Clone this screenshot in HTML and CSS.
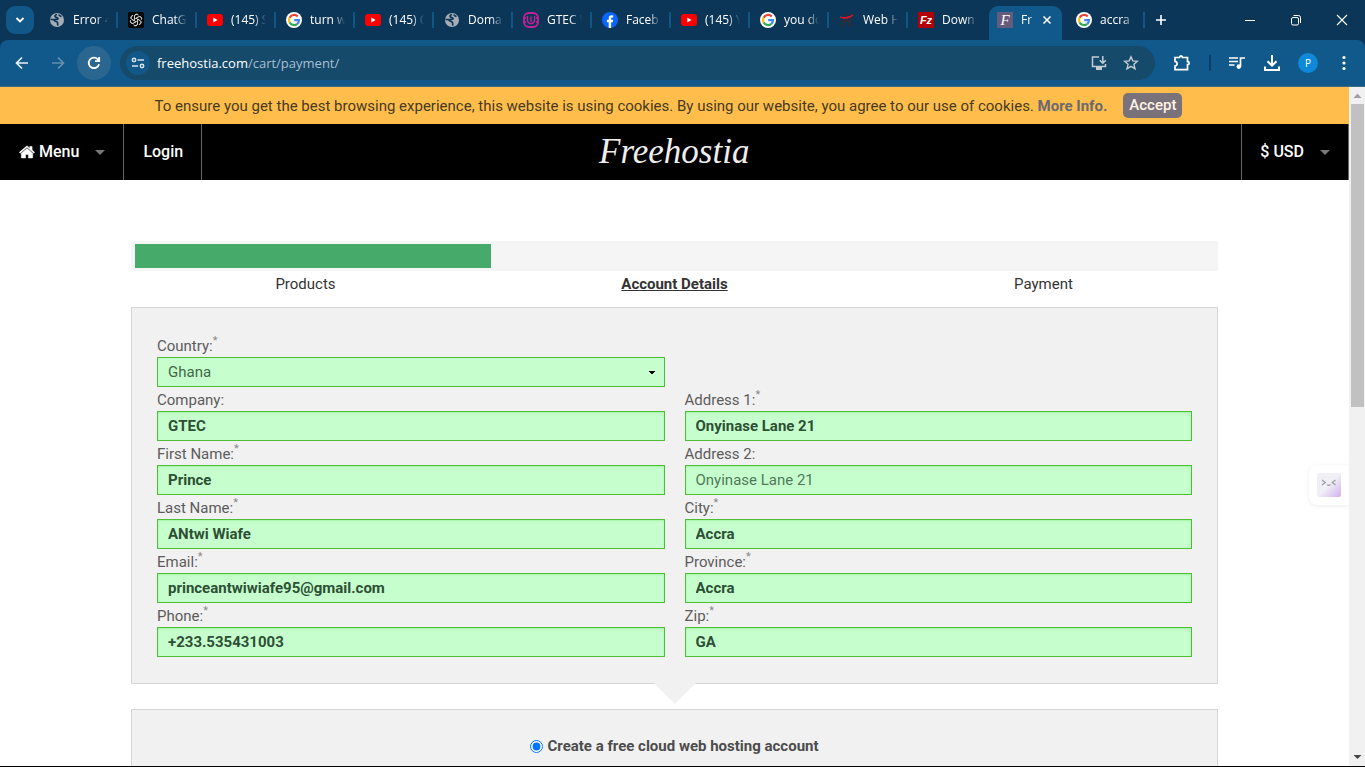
FILE: index.html
```html
<!DOCTYPE html>
<html lang="en">
<head>
<meta charset="utf-8">
<title>Freehostia - Payment</title>
<link rel="stylesheet" href="styles.css">
</head>
<body>
<svg class="defs" aria-hidden="true">
  <symbol id="globe" viewBox="0 0 16 16"><circle cx="8" cy="8" r="7" fill="#a6adb5"/><path d="M8 2.500C6 3 5.500 4 6.500 5c1 .8 2.500.2 2.500 1.500S6.500 7.500 5 7.500H1.500M5 8c.5 2 3 1 3.500 2.500S8 13 9.500 13M10 2.500c0 1.500 1.500 1.500 2.500 2" fill="none" stroke="#0c3556" stroke-width="1.700"/></symbol>
  <symbol id="yt" viewBox="0 0 16 16"><rect y="2" width="16" height="12" rx="3" fill="#f00"/><path d="M6.300 5.500v5L10.600 8z" fill="#fff"/></symbol>
  <symbol id="google" viewBox="0 0 16 16"><circle cx="8" cy="8" r="8" fill="#fff"/><g fill="none" stroke-width="2.200"><path d="M11.700 4.500A5 5 0 0 0 3.600 5.700" stroke="#ea4335"/><path d="M3.600 5.700a5 5 0 0 0 0 4.700" stroke="#fbbc05"/><path d="M3.600 10.400a5 5 0 0 0 7.700 1.400" stroke="#34a853"/><path d="M11.300 11.800A5 5 0 0 0 13 8.200H8.200" stroke="#4285f4"/></g></symbol>
  <symbol id="gpt" viewBox="0 0 24 24"><rect width="24" height="24" rx="3" fill="#050505"/><g fill="none" stroke="#d8d8d8" stroke-width="1.200"><path id="petal" d="M12 9.400 9.700 10.700V6.400c0-3.800 4.900-4.300 6.100-1.400M12 9.400l3.700-2.100c2.800-1.400 5.200 1.400 4.300 3.700"/><use href="#petal" transform="rotate(60 12 12)"/><use href="#petal" transform="rotate(120 12 12)"/><use href="#petal" transform="rotate(180 12 12)"/><use href="#petal" transform="rotate(240 12 12)"/><use href="#petal" transform="rotate(300 12 12)"/></g></symbol>
  <symbol id="gtec" viewBox="0 0 16 16"><rect x="1" y="1" width="14" height="14" rx="5" fill="none" stroke="#c4219a" stroke-width="1.800"/><path d="M0 6h3M0 10h3M13 6h3M13 10h3M4.500 4v5.500l2 2h3l2-2V4M8 4.500V10" fill="none" stroke="#c4219a" stroke-width="1.400"/></symbol>
  <symbol id="fb" viewBox="0 0 16 16"><circle cx="8" cy="8" r="8" fill="#0866ff"/><path d="M6.700 16v-5.700H4.900V7.800h1.800V6.600c0-2.200 1-3.300 3.100-3.300l1.400.1v2.200h-.9c-.9 0-1.200.4-1.200 1.200v1h2.100l-.4 2.500H9.100V16z" fill="#fff"/></symbol>
  <symbol id="webh" viewBox="0 0 16 16"><path d="M6.500 1.500 3.500 14.500M12.500 1.500 10 14.500M5 8.500h6" fill="none" stroke="#2b2f3a" stroke-width="2.400"/><path d="M1 5c4 1.500 9 0 13-2-3 3-8 4.500-13 2z" fill="#e3122d" stroke="#e3122d"/></symbol>
</svg>

<header class="browser">
  <div class="tabstrip">
    <button class="tab-search" aria-label="Search tabs"><svg width="10" height="10" viewBox="0 0 10 10"><path d="M1.500 3 5 6.500 8.500 3" fill="none" stroke="#fff" stroke-width="1.800"/></svg></button>
    <div class="tabs">
      <a class="tab" href="#"><svg class="fav"><use href="#globe"/></svg><span>Error 4</span></a>
      <a class="tab" href="#"><svg class="fav"><use href="#gpt"/></svg><span>ChatG</span></a>
      <a class="tab" href="#"><svg class="fav"><use href="#yt"/></svg><span>(145) S</span></a>
      <a class="tab" href="#"><svg class="fav"><use href="#google"/></svg><span>turn w</span></a>
      <a class="tab" href="#"><svg class="fav"><use href="#yt"/></svg><span>(145) C</span></a>
      <a class="tab" href="#"><svg class="fav"><use href="#globe"/></svg><span>Doma</span></a>
      <a class="tab" href="#"><svg class="fav"><use href="#gtec"/></svg><span>GTEC W</span></a>
      <a class="tab" href="#"><svg class="fav"><use href="#fb"/></svg><span>Faceb</span></a>
      <a class="tab" href="#"><svg class="fav"><use href="#yt"/></svg><span>(145) Y</span></a>
      <a class="tab" href="#"><svg class="fav"><use href="#google"/></svg><span>you do</span></a>
      <a class="tab" href="#"><svg class="fav"><use href="#webh"/></svg><span>Web H</span></a>
      <a class="tab last" href="#"><i class="fav filezilla">Fz</i><span>Down</span></a>
      <div class="tab active"><i class="fav script-f">F</i><span>Fr</span><button class="close" aria-label="Close tab"><svg width="10" height="10" viewBox="0 0 10 10"><path d="M1.500 1.500l7 7m0-7-7 7" stroke="#fff" stroke-width="1.600"/></svg></button></div>
      <a class="tab" href="#"><svg class="fav"><use href="#google"/></svg><span>accra</span></a>
    </div>
    <button class="new-tab" aria-label="New tab"><svg width="12" height="12" viewBox="0 0 12 12"><path d="M6 1v10M1 6h10" stroke="#fff" stroke-width="1.600"/></svg></button>
    <div class="window-controls">
      <button aria-label="Minimize"><svg width="12" height="12" viewBox="0 0 12 12"><path d="M1 6.500h10" stroke="#fff"/></svg></button>
      <button aria-label="Restore"><svg width="12" height="12" viewBox="0 0 12 12" fill="none" stroke="#fff"><rect x="1.500" y="3.500" width="7" height="7.500" rx="1.500"/><path d="M3.500 1.500H8.500a2 2 0 0 1 2 2V9"/></svg></button>
      <button aria-label="Close"><svg width="12" height="12" viewBox="0 0 12 12"><path d="M1 1l10 10m0-10L1 11" stroke="#fff" stroke-width="1.100"/></svg></button>
    </div>
  </div>
  <div class="toolbar">
    <button class="tool" aria-label="Back"><svg width="16" height="16" viewBox="0 0 16 16" fill="none" stroke="#e6f0f8" stroke-width="1.700"><path d="M14 8H3M8 2.500 2.500 8 8 13.500"/></svg></button>
    <button class="tool" aria-label="Forward"><svg width="16" height="16" viewBox="0 0 16 16" fill="none" stroke="#668fae" stroke-width="1.700"><path d="M2 8h11M8 2.500 13.500 8 8 13.500"/></svg></button>
    <button class="tool reload" aria-label="Reload"><svg width="16" height="16" viewBox="0 0 16 16" fill="none" stroke="#fff" stroke-width="1.800"><path d="M13 9.200A5.200 5.200 0 1 1 11.800 4.400L13 5.600M13.200 2v4.200H9"/></svg></button>
    <div class="omnibox">
      <button class="site-info" aria-label="Site information"><svg width="14" height="14" viewBox="0 0 14 14" fill="none" stroke="#d6e4ef" stroke-width="1.500"><circle cx="3" cy="4" r="1.700"/><path d="M6.500 4H13M1 10h6"/><circle cx="11" cy="10" r="1.700"/></svg></button>
      <span class="url">freehostia.com<span class="path">/cart/payment/</span></span>
      <button class="omni-icon" aria-label="Install app"><svg width="18" height="16" viewBox="0 0 18 16" fill="none" stroke="#c3cbd3" stroke-width="1.500"><path d="M9 2H2.500v9.500h13V9M12.800 1v7M9.800 5.200l3 3 3-3"/><path d="M6 13.500h6" stroke-width="3"/></svg></button>
      <button class="omni-icon" aria-label="Bookmark"><svg width="16" height="16" viewBox="0 0 16 16" fill="none" stroke="#c3cbd3" stroke-width="1.400"><path d="M8 1.800l1.800 4.100 4.600.4-3.500 3 1.100 4.400L8 11.300l-4 2.400 1.100-4.400-3.500-3 4.600-.4z"/></svg></button>
    </div>
    <div class="actions">
      <button aria-label="Extensions"><svg width="20" height="20" viewBox="0 0 20 20" fill="none" stroke="#fff" stroke-width="1.700"><path d="M3 4.500h4.500C7.500 2.300 10.500 2.300 10.500 4.500H15.500V8.700c2.200 0 2.200 3 0 3v5H3v-3.800c2.800-.4 2.800-4.100 0-4.500z"/></svg></button>
      <span class="divider"></span>
      <button aria-label="Media controls"><svg width="18" height="16" viewBox="0 0 18 16" fill="none" stroke="#fff" stroke-width="1.700"><path d="M1 3h9M1 6.500h9M1 10h5.500M12.500 11.500V3H17"/><circle cx="10.800" cy="11.600" r="2.300" fill="#fff" stroke="none"/></svg></button>
      <button aria-label="Downloads"><svg width="18" height="18" viewBox="0 0 18 18" fill="none" stroke="#fff" stroke-width="2"><path d="M9 1v10.500M4.500 7.200 9 11.700l4.500-4.500M2 12.500V16h14v-3.500"/></svg></button>
      <button class="avatar" aria-label="Profile">P</button>
      <button class="more" aria-label="More"><svg width="6" height="16" viewBox="0 0 6 16" fill="#fff"><circle cx="3" cy="2.500" r="1.600"/><circle cx="3" cy="8" r="1.600"/><circle cx="3" cy="13.500" r="1.600"/></svg></button>
    </div>
  </div>
</header>

<div class="viewport">
  <div class="page">
    <div class="cookies">
      <p>To ensure you get the best browsing experience, this website is using cookies. By using our website, you agree to our use of cookies. <a href="#">More Info.</a></p>
      <button>Accept</button>
    </div>
    <nav class="nav">
      <a class="nav-item" href="#"><svg width="16" height="14" viewBox="0 0 16 14" fill="#fff"><path d="M8 3.400 2.300 8.200V12.400c0 .4.200.6.600.6H6.600V9.400h2.800V13h3.700c.4 0 .6-.2.600-.6V8.200zM.3 7.300 8 .8l2.800 2.400V1.400h2.300v3.700l2.600 2.200-.8.900L8 2.300 1.100 8.200z" stroke="#fff" stroke-width=".5"/></svg>Menu<i class="caret"></i></a>
      <a class="nav-item" href="#">Login</a>
      <a class="logo" href="#">Freehostia</a>
      <a class="nav-item currency" href="#">$ USD<i class="caret"></i></a>
    </nav>
    <main class="content">
      <div class="progress"><div class="progress-fill"></div></div>
      <ol class="steps"><li>Products</li><li class="current">Account Details</li><li>Payment</li></ol>
      <form>
        <section class="panel details">
          <div class="field country"><label for="country">Country:<sup>*</sup></label><select id="country"><option>Ghana</option></select></div>
          <div class="field"><label for="company">Company:</label><input id="company" value="GTEC"></div>
          <div class="field"><label for="a1">Address 1:<sup>*</sup></label><input id="a1" value="Onyinase Lane 21"></div>
          <div class="field"><label for="first">First Name:<sup>*</sup></label><input id="first" value="Prince"></div>
          <div class="field"><label for="a2">Address 2:</label><input id="a2" placeholder="Onyinase Lane 21"></div>
          <div class="field"><label for="last">Last Name:<sup>*</sup></label><input id="last" value="ANtwi Wiafe"></div>
          <div class="field"><label for="city">City:<sup>*</sup></label><input id="city" value="Accra"></div>
          <div class="field"><label for="email">Email:<sup>*</sup></label><input id="email" value="princeantwiwiafe95@gmail.com"></div>
          <div class="field"><label for="province">Province:<sup>*</sup></label><input id="province" value="Accra"></div>
          <div class="field"><label for="phone">Phone:<sup>*</sup></label><input id="phone" value="+233.535431003"></div>
          <div class="field"><label for="zip">Zip:<sup>*</sup></label><input id="zip" value="GA"></div>
        </section>
        <section class="panel hosting">
          <label><input type="radio" name="hosting" checked>Create a free cloud web hosting account</label>
        </section>
      </form>
    </main>
    <button class="assistant" aria-label="Assistant"><svg width="24" height="24" viewBox="0 0 24 24"><defs><linearGradient id="face" x1="0" y1="0" x2="1" y2="1"><stop offset=".5" stop-color="#f0eff5"/><stop offset="1" stop-color="#d3adef"/></linearGradient></defs><rect width="24" height="24" rx="2" fill="url(#face)"/><path d="M5 7l3.200 2.500L5 12M18.500 7l-3.200 2.500 3.200 2.500M10.300 11.500c.5 1 2.500 1 3 0" fill="none" stroke="#a3a3aa" stroke-width="1.500"/></svg></button>
  </div>
  <div class="scrollbar">
    <svg width="16" height="17" viewBox="0 0 16 17"><path d="M4.500 11 8.500 6.500l4 4.500z" fill="#a0a0a0"/></svg>
    <div class="thumb"></div>
    <svg width="16" height="17" viewBox="0 0 16 17"><path d="M4.500 6h8l-4 4z" fill="#444"/></svg>
  </div>
</div>
</body>
</html>
```
FILE: styles.css
```css
* { box-sizing: border-box; }
body {
  margin: 0;
  height: 100vh;
  display: flex;
  flex-direction: column;
  overflow: hidden;
  border-bottom: 1px solid #000;
  background: #fff;
  color: #4c4c4c;
  font: 15px/20px Roboto, "Liberation Sans", sans-serif;
}
button { border: 0; padding: 0; background: none; font: inherit; color: inherit; display: flex; align-items: center; justify-content: center; }
a { color: inherit; text-decoration: none; }
.defs { position: absolute; width: 0; height: 0; }

/* Browser frame */
.browser { flex: none; background: #0c3657; color: #fff; font: 12px/16px "Open Sans", "Noto Sans", sans-serif; }
.tabstrip { display: flex; height: 40px; align-items: center; }
.tab-search { width: 28px; height: 28px; margin: 0 5px 0 6px; border-radius: 9px; background: #115787; }
.tabs { display: flex; align-items: flex-end; height: 40px; }
.tab { position: relative; display: flex; align-items: center; gap: 8px; width: 79px; height: 34px; padding: 0 10px 6px; }
.tab::after { content: ""; position: absolute; right: 0; top: 6px; width: 2px; height: 16px; background: #135684; }
.tab.last::after, .tab.active::after { display: none; }
.tab span { flex: 1; overflow: hidden; white-space: nowrap; mask-image: linear-gradient(90deg, #000 65%, transparent); }
.fav { flex: none; width: 16px; height: 16px; text-align: center; }
.filezilla { border-radius: 1px; background: #b30000; font: italic 700 11px/16px "Liberation Sans", sans-serif; }
.script-f { background: #655b7d; font: italic 15px/16px "Liberation Serif", serif; }
.tab.active { width: 73px; margin: 0 4px 0 2px; padding: 0 10px 6px 8px; border-radius: 9px 9px 0 0; background: #10598a; }
.tab.active .close { width: 10px; }
.new-tab { width: 32px; height: 28px; }
.window-controls { display: flex; margin-left: auto; }
.window-controls button { width: 46px; height: 40px; }
.toolbar { display: flex; align-items: center; height: 47px; padding: 0 18px 0 5px; background: #10598a; border-radius: 8px 8px 0 0; border-bottom: 1px solid #3f6c84; }
.tool { width: 34px; height: 34px; margin-right: 2px; border-radius: 50%; }
.reload { background: #2a6690; }
.omnibox { flex: 1; display: flex; align-items: center; height: 34px; margin: 0 17px 0 7px; padding: 0 15px 0 6px; border-radius: 17px; background: #154a6b; }
.site-info { width: 24px; height: 24px; margin-right: 7px; border-radius: 50%; background: #115787; }
.url { flex: 1; font-size: 13px; }
.path { color: #a9bfd0; }
.omni-icon { width: 18px; margin-left: 14px; }
.actions { display: flex; align-items: center; gap: 17px; }
.divider { width: 2px; height: 16px; background: #0b4068; }
.avatar { width: 20px; height: 20px; border-radius: 50%; background: #0e88d8; font-size: 10px; }
.more { margin-left: 6px; }

/* Page */
.viewport { flex: 1; min-height: 0; display: flex; }
.page { position: relative; flex: 1; overflow: hidden; }
.cookies { display: flex; align-items: center; justify-content: center; gap: 16px; height: 37px; padding-right: 12px; background: #ffbe4b; color: #473a22; }
.cookies p { margin: 0; }
.cookies a { font-weight: 700; color: #6b696f; }
.cookies button { padding: 2px 6px 3px; border-radius: 5px; background: #79727b; color: #fff3e4; font-weight: 500; }
.nav { display: flex; height: 56px; background: #000; color: #fff; font-size: 16px; font-weight: 500; }
.nav-item { display: flex; align-items: center; gap: 4px; padding: 0 18px 0 19px; border-right: 1px solid #666; }
.caret { margin-left: 12px; border: 5px solid transparent; border-top-color: #777; border-bottom: 0; }
.logo { flex: 1; display: flex; align-items: center; justify-content: center; padding-right: 95px; color: #eee; font: italic 35px/40px "Liberation Serif", serif; }
.currency { padding: 0 18px; border-left: 1px solid #666; }
.content { width: 81%; max-width: 1087px; margin: 61px auto 0; }
.progress { height: 30px; padding: 3px 4px; background: #f5f5f5; }
.progress-fill { width: 33%; height: 24px; background: #46ab6a; }
.steps { display: grid; grid-template-columns: repeat(3, 1fr); margin: 3px -10px 13px; padding: 0; list-style: none; text-align: center; color: #333; }
.current { font-weight: 700; text-decoration: underline; }
.panel { position: relative; padding: 25px; border: 1px solid #d5d5d5; background: #f1f1f1; }
.details { display: grid; grid-template-columns: 1fr 1fr; column-gap: 20px; padding-bottom: 26px; }
.details::after { content: ""; position: absolute; top: 100%; left: 50%; margin: -1px 0 0 -22px; border: 22px solid transparent; border-top-color: #f1f1f1; border-bottom: 0; }
.field { display: flex; flex-direction: column; color: #5c5c5c; }
.country { grid-row: 1; grid-column: 1; }
.country + .field { grid-column: 1; }
.field label { height: 24px; line-height: 26px; }
sup { color: #888; font-size: 11px; line-height: 0; vertical-align: 7px; }
.field input, .field select { appearance: none; width: 100%; height: 30px; padding: 0 10px; border: 1px solid #4dbd33; border-radius: 0; background: #c6ffcd; color: #2d4f34; font: inherit; font-weight: 700; outline: 0; }
.field input { box-shadow: inset 0 1px 2px #a5f5a8; }
.field input::placeholder { color: #52785a; font-weight: 400; opacity: 1; }
.field select { color: #406847; font-weight: 400; background: linear-gradient(#000, #000) right 9px top 13px / 6px 1px no-repeat, linear-gradient(#000, #000) right 10px top 14px / 4px 1px no-repeat, linear-gradient(#000, #000) right 11px top 15px / 2px 1px no-repeat, #c6ffcd; }
.hosting { margin-top: 25px; height: 100px; display: flex; justify-content: center; font-weight: 700; }
.hosting label { display: flex; align-items: center; gap: 4px; height: 22px; }
.hosting input { width: 13px; height: 13px; margin: 0; accent-color: #0075ff; }
.assistant { position: absolute; right: 0; top: 378px; width: 40px; height: 40px; border-radius: 8px 0 0 8px; background: #fff; box-shadow: 0 1px 4px #00000014; }
.scrollbar { flex: none; width: 16px; display: flex; flex-direction: column; background: #f1f1f1; }
.thumb { height: 303px; margin: 0 1px auto 2px; background: #c1c1c1; }
```
